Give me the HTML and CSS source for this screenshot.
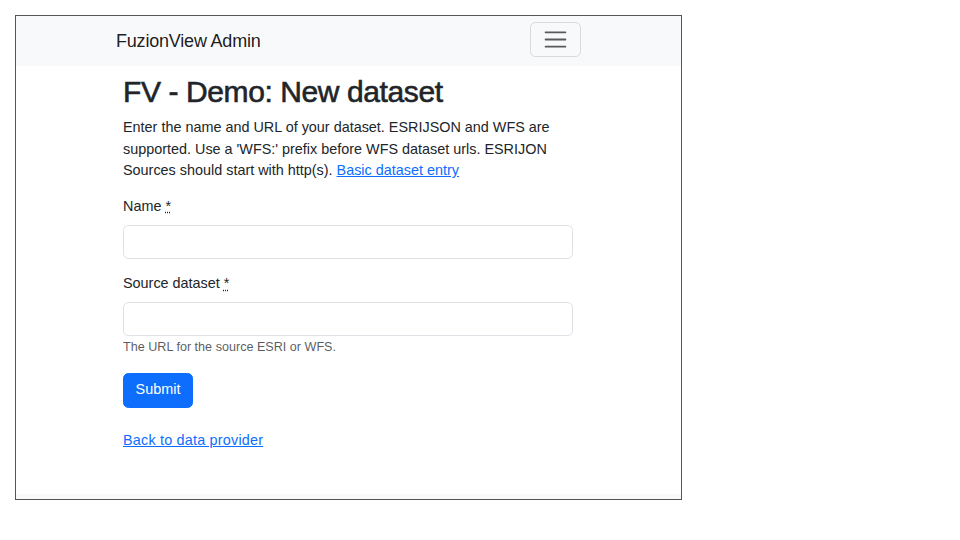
FILE: index.html
```html
<!DOCTYPE html>
<html lang="en">
<head>
<meta charset="utf-8">
<title>FuzionView Admin</title>
<link rel="stylesheet" href="styles.css">
</head>
<body>
<div class="frame">
  <nav class="navbar">
    <div class="nav-inner">
      <a class="brand" href="#">FuzionView Admin</a>
      <button class="toggler" type="button" aria-label="Toggle navigation">
        <svg class="toggler-icon" viewBox="0 0 30 30" width="27" height="27" aria-hidden="true">
          <path d="M4 7h22M4 15h22M4 23h22" stroke="rgba(33,37,41,0.75)" stroke-width="2" stroke-linecap="round" fill="none"/>
        </svg>
      </button>
    </div>
  </nav>
  <main class="main">
    <h1 class="title">FV - Demo: New dataset</h1>
    <p class="intro">Enter the name and URL of your dataset. ESRIJSON and WFS are supported. Use a 'WFS:' prefix before WFS dataset urls. ESRIJON Sources should start with http(s). <a href="#" class="link">Basic dataset entry</a></p>
    <form class="form">
      <div class="field">
        <label class="label" for="name">Name <abbr title="required">*</abbr></label>
        <input class="input" id="name" type="text">
      </div>
      <div class="field">
        <label class="label" for="src">Source dataset <abbr title="required">*</abbr></label>
        <input class="input" id="src" type="text">
        <div class="help">The URL for the source ESRI or WFS.</div>
      </div>
      <button class="btn" type="button">Submit</button>
    </form>
    <a href="#" class="link back">Back to data provider</a>
  </main>
  <footer class="footer"></footer>
</div>
</body>
</html>
```
FILE: styles.css
```css
* { box-sizing: border-box; }
html, body { margin: 0; padding: 0; background: #fff; }
body {
  font-family: "Liberation Sans", Arial, sans-serif;
  font-size: 14.4px;
  line-height: 1.5;
  color: #212529;
}
.frame {
  margin: 15px 0 0 15px;
  width: 667px;
  height: 485px;
  border: 1px solid #555;
  overflow: hidden;
  display: flex;
  flex-direction: column;
}
.navbar {
  background: #f8f9fa;
  height: 50px;
  flex: none;
}
.nav-inner {
  width: 465px;
  margin: 0 auto;
  height: 100%;
  padding-top: 6px;
  display: flex;
  align-items: flex-start;
  justify-content: space-between;
}
.brand {
  font-size: 18px;
  color: rgba(0,0,0,0.9);
  text-decoration: none;
  line-height: 27px;
  margin-top: 6px;
  letter-spacing: -0.2px;
}
.toggler {
  width: 51px;
  height: 35px;
  padding: 0;
  background: transparent;
  border: 1px solid rgba(0,0,0,0.12);
  border-radius: 5.4px;
  display: flex;
  align-items: center;
  justify-content: center;
}
.toggler-icon { display: block; }
.main {
  width: 450px;
  margin-left: 107px;
  padding-top: 8px;
  flex: 1;
}
.title {
  font-size: 30px;
  font-weight: 400;
  line-height: 1.2;
  margin: 0 0 7px;
  letter-spacing: -0.4px;
  -webkit-text-stroke: 0.6px #212529;
}
.intro { margin: 0 0 14.4px; }
.link { color: #0d6efd; text-decoration: underline; }
.field { margin-bottom: 14.4px; }
.label { display: block; margin-bottom: 7.2px; }
abbr { text-decoration: underline dotted; cursor: help; }
.input {
  display: block;
  width: 100%;
  height: 34px;
  border: 1px solid #dee2e6;
  border-radius: 5.4px;
  font: inherit;
  padding: 5px 11px;
  background: #fff;
}
.help {
  margin-top: 2px;
  font-size: 12.6px;
  color: rgba(33,37,41,0.75);
}
.btn {
  display: block;
  width: 70px;
  height: 35px;
  margin-top: 15.6px;
  background: #0d6efd;
  border: 1px solid #0d6efd;
  border-radius: 5.4px;
  color: #fff;
  font: inherit;
  padding: 0;
  margin-bottom: 22px;
}
.back { display: inline-block; letter-spacing: 0.2px; }
.footer {
  height: 5px;
  background: #f8f9fa;
  flex: none;
}
```
